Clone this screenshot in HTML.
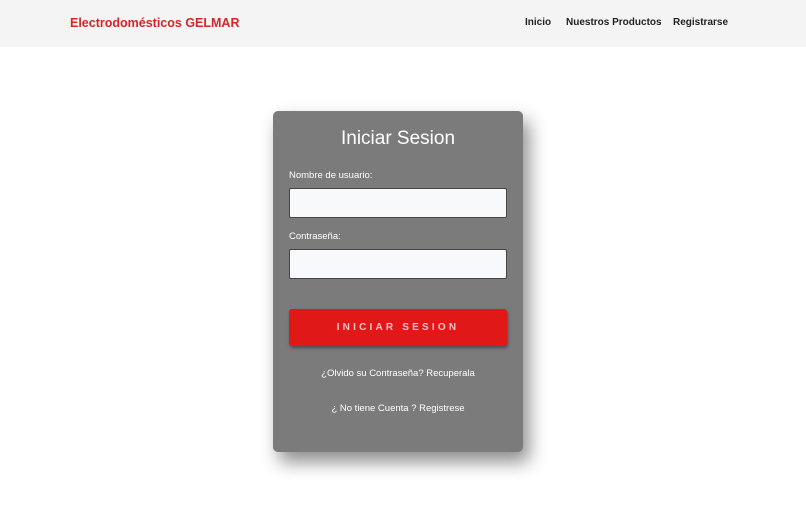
<!DOCTYPE html>
<html><head><meta charset="utf-8"><style>
*{box-sizing:border-box;margin:0;padding:0}
body{width:806px;height:510px;background:#fff;font-family:"Liberation Sans",sans-serif;overflow:hidden;position:relative}
.nav{position:absolute;left:0;top:0;width:806px;height:47px;background:#f4f4f4}
.brand{position:absolute;left:70px;top:16px;color:#d3262b;font-size:12.5px;font-weight:bold}
.links{position:absolute;top:17px;font-size:10px;color:#222;font-weight:bold}
.card{position:absolute;left:273px;top:111px;width:250px;height:341px;background:#7b7b7b;border-radius:5px;box-shadow:6px 10px 18px rgba(0,0,0,.45)}
h1{position:absolute;top:17px;width:100%;text-align:center;color:#fff;font-weight:normal;font-size:19px}
.lbl{position:absolute;left:16px;color:#fff;font-size:9.5px}
.inp{position:absolute;left:16px;width:218px;height:30px;background:#f8f9fb;border:1px solid #444;border-radius:2px}
.btn{position:absolute;left:16px;top:198px;width:218px;height:37px;background:#e01818;border-radius:3px;box-shadow:1px 2px 3px rgba(0,0,0,.4);color:#f4c4c4;font-size:10px;font-weight:bold;letter-spacing:3.2px;text-align:center;line-height:37px}
.lk{position:absolute;width:100%;text-align:center;color:#fff;font-size:9.5px}
</style></head><body>
<div class="nav"><div class="brand">Electrodomésticos GELMAR</div>
<div class="links" style="left:525px">Inicio</div>
<div class="links" style="left:566px">Nuestros Productos</div>
<div class="links" style="left:673px">Registrarse</div></div>
<div class="card">
<h1>Iniciar Sesion</h1>
<div class="lbl" style="top:59px">Nombre de usuario:</div>
<div class="inp" style="top:77px"></div>
<div class="lbl" style="top:120px">Contraseña:</div>
<div class="inp" style="top:138px"></div>
<div class="btn">INICIAR SESION</div>
<div class="lk" style="top:257px">¿Olvido su Contraseña? Recuperala</div>
<div class="lk" style="top:292px">¿ No tiene Cuenta ? Registrese</div>
</div>
</body></html>
